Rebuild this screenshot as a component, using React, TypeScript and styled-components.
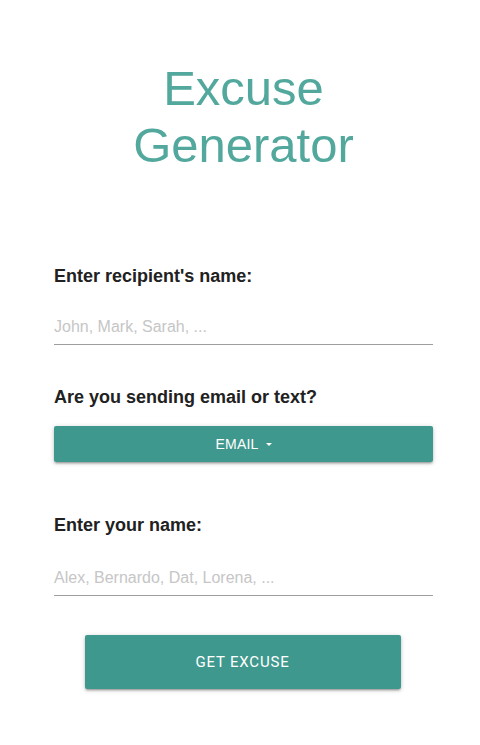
import React from 'react';
import styled, { createGlobalStyle } from 'styled-components';

const GlobalStyle = createGlobalStyle`
  html, body {
    margin: 0;
    padding: 0;
    background: #ffffff;
  }
  body {
    font-family: "Liberation Sans", Arial, sans-serif;
  }
`;

const Page = styled.main`
  width: 379px;
  margin: 0 auto;
  padding: 60px 47px 40px 54px;
  display: flex;
  flex-direction: column;
`;

const Title = styled.h1`
  margin: 0 0 91px;
  font-family: "Liberation Sans", Arial, sans-serif;
  font-weight: 400;
  font-size: 49px;
  line-height: 57px;
  color: #52a89c;
  text-align: center;
`;

const Field = styled.section<{ $gap: number }>`
  display: flex;
  flex-direction: column;
  margin-bottom: ${p => p.$gap}px;
`;

const Label = styled.label<{ $space: number }>`
  display: block;
  font-weight: 700;
  font-size: 18px;
  line-height: 22px;
  color: #212121;
  margin-bottom: ${p => p.$space}px;
`;

const TextInput = styled.input`
  box-sizing: border-box;
  width: 100%;
  height: 36px;
  padding: 0;
  border: none;
  border-bottom: 1px solid #9e9e9e;
  outline: none;
  background: transparent;
  font-family: "Liberation Sans", Arial, sans-serif;
  font-size: 16px;
  color: #212121;

  &::placeholder {
    color: #c6c6c6;
  }
`;

const SelectButton = styled.button`
  width: 100%;
  height: 36px;
  border: none;
  border-radius: 2px;
  background: #3f988d;
  color: #ffffff;
  font-family: "Liberation Sans", Arial, sans-serif;
  font-size: 14px;
  letter-spacing: 0.2px;
  display: flex;
  align-items: center;
  justify-content: center;
  gap: 7px;
  cursor: pointer;
  box-shadow: 0 2px 2px 0 rgba(0, 0, 0, 0.14), 0 3px 1px -2px rgba(0, 0, 0, 0.12),
    0 1px 5px 0 rgba(0, 0, 0, 0.2);
`;

const Caret = styled.span`
  width: 0;
  height: 0;
  border-left: 3px solid transparent;
  border-right: 3px solid transparent;
  border-top: 3px solid #ffffff;
  margin-top: 1px;
`;

const SubmitButton = styled.button`
  align-self: center;
  width: 316px;
  height: 54px;
  margin-right: 2px;
  border: none;
  border-radius: 2px;
  background: #3f988d;
  color: #ffffff;
  font-family: Roboto, "Liberation Sans", sans-serif;
  font-size: 15px;
  letter-spacing: 0.8px;
  text-transform: uppercase;
  cursor: pointer;
  box-shadow: 0 2px 2px 0 rgba(0, 0, 0, 0.14), 0 3px 1px -2px rgba(0, 0, 0, 0.12),
    0 1px 5px 0 rgba(0, 0, 0, 0.2);
`;

export default function App() {
  return (
    <>
      <GlobalStyle />
      <Page>
        <Title>
          Excuse
          <br />
          Generator
        </Title>

        <Field $gap={41}>
          <Label htmlFor="recipient" $space={22}>Enter recipient's name:</Label>
          <TextInput id="recipient" placeholder="John, Mark, Sarah, ..." />
        </Field>

        <Field $gap={52}>
          <Label $space={18}>Are you sending email or text?</Label>
          <SelectButton type="button">
            EMAIL
            <Caret />
          </SelectButton>
        </Field>

        <Field $gap={39}>
          <Label htmlFor="sender" $space={24}>Enter your name:</Label>
          <TextInput id="sender" placeholder="Alex, Bernardo, Dat, Lorena, ..." />
        </Field>

        <SubmitButton type="button">Get Excuse</SubmitButton>
      </Page>
    </>
  );
}
